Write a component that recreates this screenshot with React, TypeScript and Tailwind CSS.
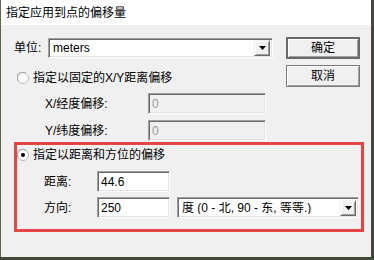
import React from "react";

const font = { fontFamily: '"Liberation Sans", "Noto Sans CJK SC", sans-serif' };

function Sunken({ className = "", children, disabled = false }: { className?: string; children?: React.ReactNode; disabled?: boolean }) {
  return (
    <div
      className={`border border-t-[#a0a0a0] border-l-[#a0a0a0] border-b-[#ffffff] border-r-[#ffffff] shadow-[inset_1px_1px_0_#6a6a6a,inset_-1px_-1px_0_#e3e3e3] ${disabled ? "bg-[#f0f0f0] text-[#9a9a9a]" : "bg-white text-black"} flex items-center pl-[3px] text-[12px] leading-none ${className}`}
    >
      {children}
    </div>
  );
}

function Arrow() {
  return (
    <div className="w-[16px] h-[16px] bg-[#f0f0f0] border border-t-[#f0f0f0] border-l-[#f0f0f0] border-b-[#696969] border-r-[#696969] shadow-[inset_1px_1px_0_#ffffff,inset_-1px_-1px_0_#a0a0a0] flex items-center justify-center">
      <svg width="7" height="4" viewBox="0 0 7 4">
        <polygon points="0,0 7,0 3.5,4" fill="#000" />
      </svg>
    </div>
  );
}

function Combo({ className = "", text }: { className?: string; text: string }) {
  return (
    <div className={`border border-t-[#a0a0a0] border-l-[#a0a0a0] border-b-[#ffffff] border-r-[#ffffff] shadow-[inset_1px_1px_0_#6a6a6a,inset_-1px_-1px_0_#e3e3e3] bg-white flex items-center p-[2px] ${className}`}>
      <div className="flex-1 pl-[2px] text-[12px] leading-none text-black whitespace-nowrap overflow-hidden">{text}</div>
      <Arrow />
    </div>
  );
}

function Radio({ checked }: { checked?: boolean }) {
  return (
    <svg width="12" height="12" viewBox="0 0 12 12" className="shrink-0">
      <circle cx="6" cy="6" r="5.5" fill="#ffffff" stroke="#b8b8b8" strokeWidth="1" />
      <path d="M1.6 9 A5 5 0 0 1 9 1.6" fill="none" stroke="#a0a0a0" strokeWidth="1" />
      {checked && <circle cx="6" cy="6" r="2" fill="#000" />}
    </svg>
  );
}

function Button({ children, def }: { children: React.ReactNode; def?: boolean }) {
  return (
    <div
      className={`w-[74px] h-[22px] flex items-center justify-center text-[12px] text-black bg-[#f0f0f0] ${def ? "border-2 border-[#6a6a6a] shadow-[inset_1px_1px_0_#ffffff,inset_-1px_-1px_0_#a0a0a0]" : "border border-[#7a7a7a] shadow-[inset_1px_1px_0_#ffffff,inset_-1px_-1px_0_#a0a0a0]"}`}
    >
      {children}
    </div>
  );
}

export default function App() {
  return (
    <div className="w-[374px] h-[260px] bg-[#3f4a36] overflow-hidden" style={font}>
      <div className="w-[371px] h-[257px] bg-[#f0f0f0] border-l border-l-[#5a6a4a] flex flex-col">
        <div className="h-[26px] bg-white flex items-center pl-[5px] text-[12px] text-black border-b border-b-[#f0f0f0]">
          指定应用到点的偏移量
        </div>
        <div className="flex mt-[11px]">
          <div className="ml-[13px] w-[259px] flex flex-col">
            <div className="h-[22px] flex items-center">
              <div className="w-[34px] text-[12px] text-black">单位:</div>
              <Combo className="w-[225px] h-[20px]" text="meters" />
            </div>
            <div className="mt-[10px] h-[18px] flex items-center gap-[4px] ml-[3px] text-[12px] text-black">
              <Radio />
              <span>指定以固定的X/Y距离偏移</span>
            </div>
            <div className="mt-[6px] h-[21px] flex items-center">
              <div className="ml-[31px] w-[103px] text-[12px] text-black">X/经度偏移:</div>
              <Sunken className="w-[118px] h-[21px]" disabled>0</Sunken>
            </div>
            <div className="mt-[6px] h-[21px] flex items-center">
              <div className="ml-[31px] w-[103px] text-[12px] text-black">Y/纬度偏移:</div>
              <Sunken className="w-[118px] h-[21px]" disabled>0</Sunken>
            </div>
          </div>
          <div className="ml-[13px] flex flex-col gap-[6px]">
            <Button def>确定</Button>
            <Button>取消</Button>
          </div>
        </div>
        <div className="ml-[13px] mt-[1px] w-[350px] h-[90px] border-[3px] border-[#e64545] flex flex-col">
          <div className="mt-[1px] h-[18px] flex items-center gap-[4px] ml-[0px] text-[12px] text-black">
            <Radio checked />
            <span>指定以距离和方位的偏移</span>
          </div>
          <div className="mt-[7px] h-[21px] flex items-center">
            <div className="ml-[27px] w-[53px] text-[12px] text-black">距离:</div>
            <Sunken className="w-[73px] h-[21px]">44.6</Sunken>
          </div>
          <div className="mt-[5px] h-[21px] flex items-center">
            <div className="ml-[27px] w-[53px] text-[12px] text-black">方向:</div>
            <Sunken className="w-[73px] h-[21px]">250</Sunken>
            <Combo className="ml-[7px] w-[182px] h-[21px]" text="度 (0 - 北, 90 - 东, 等等.)" />
          </div>
        </div>
      </div>
    </div>
  );
}
